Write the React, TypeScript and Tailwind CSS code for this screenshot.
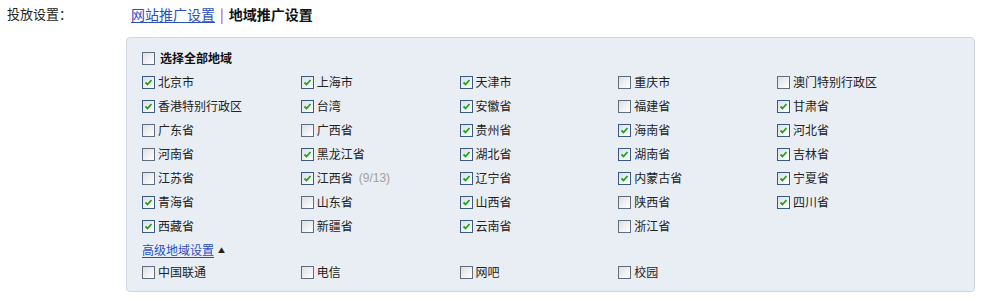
import React from "react";

type Item = { name: string; checked: boolean; extra?: string };

const rows: Item[][] = [
  [
    { name: "北京市", checked: true },
    { name: "上海市", checked: true },
    { name: "天津市", checked: true },
    { name: "重庆市", checked: false },
    { name: "澳门特别行政区", checked: false },
  ],
  [
    { name: "香港特别行政区", checked: true },
    { name: "台湾", checked: true },
    { name: "安徽省", checked: true },
    { name: "福建省", checked: false },
    { name: "甘肃省", checked: true },
  ],
  [
    { name: "广东省", checked: false },
    { name: "广西省", checked: false },
    { name: "贵州省", checked: true },
    { name: "海南省", checked: true },
    { name: "河北省", checked: true },
  ],
  [
    { name: "河南省", checked: false },
    { name: "黑龙江省", checked: true },
    { name: "湖北省", checked: true },
    { name: "湖南省", checked: true },
    { name: "吉林省", checked: true },
  ],
  [
    { name: "江苏省", checked: false },
    { name: "江西省", checked: true, extra: "(9/13)" },
    { name: "辽宁省", checked: true },
    { name: "内蒙古省", checked: true },
    { name: "宁夏省", checked: true },
  ],
  [
    { name: "青海省", checked: true },
    { name: "山东省", checked: false },
    { name: "山西省", checked: true },
    { name: "陕西省", checked: false },
    { name: "四川省", checked: true },
  ],
  [
    { name: "西藏省", checked: true },
    { name: "新疆省", checked: false },
    { name: "云南省", checked: true },
    { name: "浙江省", checked: false },
  ],
];

const isps: Item[] = [
  { name: "中国联通", checked: false },
  { name: "电信", checked: false },
  { name: "网吧", checked: false },
  { name: "校园", checked: false },
];

function Box({ checked }: { checked: boolean }) {
  return (
    <span
      className={
        "relative inline-block w-[13px] h-[13px] shrink-0 border bg-gradient-to-br from-[#dcdfe3] to-[#ffffff] " +
        (checked ? "border-[#3b5a82]" : "border-[#5f6d7e]")
      }
    >
      {checked && (
        <svg className="absolute left-[1px] top-[1px]" width="9" height="9" viewBox="0 0 9 9">
          <path d="M1.5 4.5 L3.5 6.5 L7.5 2" stroke="#21a121" strokeWidth="1.8" fill="none" />
        </svg>
      )}
    </span>
  );
}

function Cell({ item }: { item: Item }) {
  return (
    <div className="flex items-center h-[24px]">
      <Box checked={item.checked} />
      <span className="ml-[3px] text-[12px] text-[#222]">{item.name}</span>
      {item.extra && (
        <span className="ml-[6px] text-[12px] text-[#a0a0a0] font-['Liberation_Sans',sans-serif]">
          {item.extra}
        </span>
      )}
    </div>
  );
}

export default function App() {
  return (
    <div className="w-[991px] h-[299px] bg-white font-['Noto_Sans_CJK_SC','Noto_Sans',sans-serif] text-[#222] overflow-hidden">
      <div className="flex pt-[5px]">
        <div className="w-[126px] pl-[7px] text-[13px] leading-[18px]">投放设置：</div>
        <div className="text-[14px] leading-[18px] pl-[5px] flex items-center">
          <a className="text-[#2b4ec2] underline underline-offset-2">网站推广设置</a>
          <span className="mx-[5px] text-[#b4287a]">|</span>
          <span className="font-bold text-[#111]">地域推广设置</span>
        </div>
      </div>
      <div className="ml-[126px] mt-[14px] w-[849px] rounded-[4px] border border-[#cfd6de] bg-[#e9eef4] pl-[15px] pt-[8px] pb-[7px]">
        <div className="flex items-center h-[24px]">
          <Box checked={false} />
          <span className="ml-[5px] text-[12px] font-bold text-[#111]">选择全部地域</span>
        </div>
        {rows.map((r, i) => (
          <div key={i} className="grid grid-cols-[158.75px_158.75px_158.75px_158.75px_158.75px]">
            {r.map((it) => (
              <Cell key={it.name} item={it} />
            ))}
          </div>
        ))}
        <div className="flex items-center h-[24px]">
          <a className="text-[12px] text-[#2b4ec2] underline underline-offset-2">高级地域设置</a>
          <span className="ml-[4px] text-[7px] text-[#222]">▲</span>
        </div>
        <div className="grid grid-cols-[158.75px_158.75px_158.75px_158.75px_158.75px] mt-[-2px]">
          {isps.map((it) => (
            <Cell key={it.name} item={it} />
          ))}
        </div>
      </div>
    </div>
  );
}
